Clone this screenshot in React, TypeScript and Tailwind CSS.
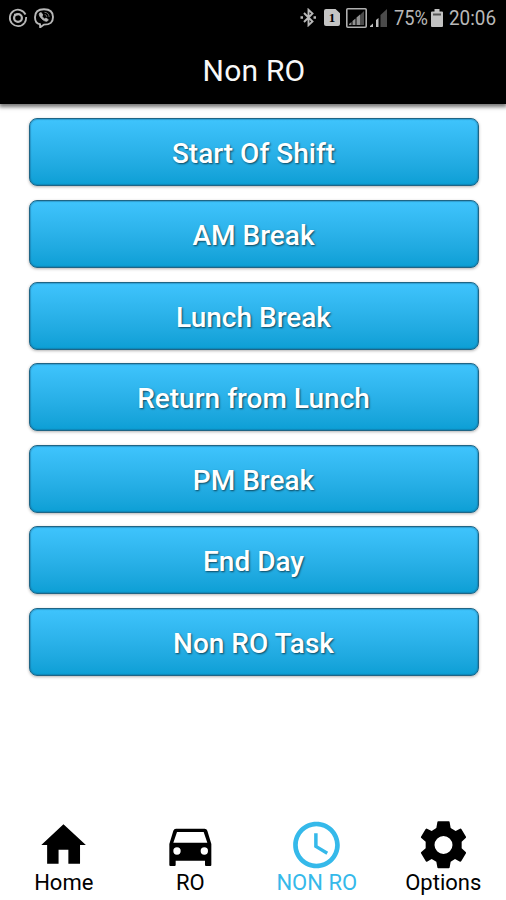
import React from 'react';

const tasks = [
  'Start Of Shift',
  'AM Break',
  'Lunch Break',
  'Return from Lunch',
  'PM Break',
  'End Day',
  'Non RO Task',
];

const tabs = [
  {
    label: 'Home',
    viewBox: '-0.2 0 24 24',
    path: 'M9.9 20v-6h4.200v6h5v-8h2.500L12 3.100 2.500 12h2.500v8z',
  },
  {
    label: 'RO',
    viewBox: '-3 3 168 168',
    path: 'M39 38H125q6 0 8 6L145 84V147q0 3-3 3H129q-3 0-3-3V134H38V147q0 3-3 3H22q-3 0-3-3V84L31 44q2-6 8-6zM42 48L31 80H133L122 48zM42 94a11 11 0 1 0 0 22a11 11 0 1 0 0-22zM124 94a11 11 0 1 0 0 22a11 11 0 1 0 0-22z',
  },
  {
    label: 'NON RO',
    active: true,
    viewBox: '-0.2 0 24 24',
    path: 'M11.99 2C6.47 2 2 6.48 2 12s4.47 10 9.99 10C17.52 22 22 17.52 22 12S17.52 2 11.99 2zM12 20c-4.42 0-8-3.58-8-8s3.58-8 8-8 8 3.58 8 8-3.58 8-8 8zm.5-13H11v6l5.25 3.15.75-1.23-4.5-2.67z',
  },
  {
    label: 'Options',
    viewBox: '0 3 168 168',
    path: 'M70 16H101q3 0 3 3L107 36 122 45 135 38q3-1 4 1L153 62q1 3-1 4L140 77V97L152 108q2 1 1 4L139 135q-2 3-4 2L120 129 107 137 104 154q0 3-3 3H70q-3 0-3-3L64 137 50 129 36 137q-3 1-4-2L18 112q-1-3 1-4L32 97V77L19 66q-2-2-1-4L32 39q2-2 4-1L50 45 64 36 67 19q0-3 3-3zM85.500 60a27 27 0 1 0 0 54a27 27 0 1 0 0-54z',
  },
];

const StatusBar = () => (
  <div className="flex h-9 items-center justify-between pl-2 pr-[10px] pb-px text-[#b8b8b8]">
    <div className="flex items-center gap-[6px]">
      {/* Swirl notification */}
      <svg className="h-5 w-5" viewBox="0 0 20 20" fill="none" stroke="currentColor" strokeWidth="1.8">
        <path d="M17.500 6.500A8.200 8.200 0 1 0 16.500 15" />
        <path d="M18.200 9q0 3.500-1.700 6" />
        <circle cx="10" cy="10" r="3.900" strokeWidth="2.200" />
        <path d="M6 6.500h4" strokeWidth="1.500" />
      </svg>
      {/* Viber */}
      <svg className="h-5 w-5" viewBox="0 0 20 20" fill="none" stroke="currentColor" strokeWidth="1.9">
        <path d="M6 16.2C2.8 15.7 1 13.6 1 9.2 1 3.5 3.8 1.2 10 1.2s9 2.3 9 7.8-2.800 7.600-9 7.600L6.200 19.300z" />
        <path d="M5.500 5.200c-.9 1.300.6 4 2.300 5.600 1.700 1.700 4.200 3 5.500 2.300l1-1.400-2.300-1.700-1.300.9C9.300 10.200 8.200 9.100 8 8l.9-1L7.200 4.600z" fill="currentColor" strokeWidth=".8" />
        <path d="M10.500 4.300c2.800.1 4.500 1.800 4.600 4.700M10.700 6.600c1.400.1 2 .9 2.100 2.300" strokeWidth="1" opacity=".6" />
      </svg>
    </div>
    <div className="flex items-center">
      <svg className="mr-[6px] h-[19px] w-[18px]" viewBox="0 0 18 19" fill="none" stroke="currentColor" strokeWidth="1.900">
        <path d="M4 5l8.500 8.500-4 3.700V1.800l4 3.700L4 14" />
        <path d="M.5 9.500h2.500M13.500 9.500h2.500" strokeWidth="2.400" />
      </svg>
      <span className="mr-[6px] flex h-[17px] w-4 items-center justify-center rounded-[2px] bg-[#c4c4c4] font-['Liberation_Serif',serif] text-[13px] font-bold leading-none text-black [clip-path:polygon(0_0,72%_0,100%_25%,100%_100%,0_100%)]">
        1
      </span>
      <svg className="mr-[3px] h-5 w-[21px]" viewBox="0 0 21 20">
        <rect x=".8" y=".8" width="19.400" height="18.400" rx="1" fill="none" stroke="#b0b0b0" strokeWidth="1.600" />
        <path d="M14 7l4-4v14h-4z" fill="#4b4b4b" />
        <path d="M3 17v-1l2.500-2v3z" fill="#8a8a8a" />
        <path d="M6.500 17v-4l3-2.500V17zM10.500 17v-7.500L14 6.500V17z" fill="#929292" />
      </svg>
      <svg className="mr-[7px] h-[18px] w-[17px]" viewBox="0 0 17 18">
        <path d="M10.500 6l6.500-6v18h-6.500z" fill="#4b4b4b" />
        <path d="M0 18v-1l3-2.500v3.500zM6 18v-7l2.500-2v9z" fill="#c0c0c0" />
      </svg>
      <span className="w-[36px] origin-left scale-x-[0.87] whitespace-nowrap text-[21px] leading-6">75%</span>
      <svg className="ml-px mr-[6px] h-[18px] w-3" viewBox="0 0 12 18">
        <path d="M3.500 0h5v2.500H11q1 0 1 1V17q0 1-1 1H1q-1 0-1-1V3.500q0-1 1-1h2.500z" fill="#c2c2c2" />
        <path d="M2 4.500h8v2H2z" fill="#555" />
      </svg>
      <span className="w-[47px] origin-left scale-x-[0.9] whitespace-nowrap text-[21px] leading-6">20:06</span>
    </div>
  </div>
);

const App = () => {
  return (
    <div className="flex h-[900px] w-[506px] flex-col overflow-hidden bg-white font-[Roboto,sans-serif]">
      <header className="h-[104px] shrink-0 bg-black shadow-[0_2px_4px_1px_rgba(0,0,0,0.55)]">
        <StatusBar />
        <h1 className="flex h-[69px] items-center justify-center pl-[2px] text-[30px] leading-none tracking-[0.2px] text-[#f8f8f8]">
          Non RO
        </h1>
      </header>

      <main className="flex flex-1 flex-col gap-[13.6px] px-7 pt-[14.4px]">
        {tasks.map((task) => (
          <button
            key={task}
            className="ml-[0.5px] flex h-[68px] w-[450px] items-center justify-center rounded-[8px] border border-[#1f6585] bg-linear-to-b from-[#3fc4fd] to-[#0b9fd5] pt-[4px] text-[28px] font-medium leading-none text-white shadow-[0_1px_3px_rgba(0,0,0,0.3),inset_0_0_1px_1px_rgba(20,90,130,0.35)] [text-shadow:1px_1px_2px_rgba(0,0,0,0.6)]"
          >
            {task}
          </button>
        ))}
      </main>

      <nav className="grid h-[83px] shrink-0 grid-cols-4">
        {tabs.map((tab) => (
          <button
            key={tab.label}
            className={tab.active ? 'flex flex-col items-center text-[#35b9ea]' : 'flex flex-col items-center text-black'}
          >
            <svg className="h-14 w-14 shrink-0" viewBox={tab.viewBox} fill="currentColor" fillRule="evenodd">
              <path d={tab.path} />
            </svg>
            <span className="-mt-[2px] whitespace-nowrap pl-px text-[22px] leading-6">{tab.label}</span>
          </button>
        ))}
      </nav>
    </div>
  );
};

export default App;
